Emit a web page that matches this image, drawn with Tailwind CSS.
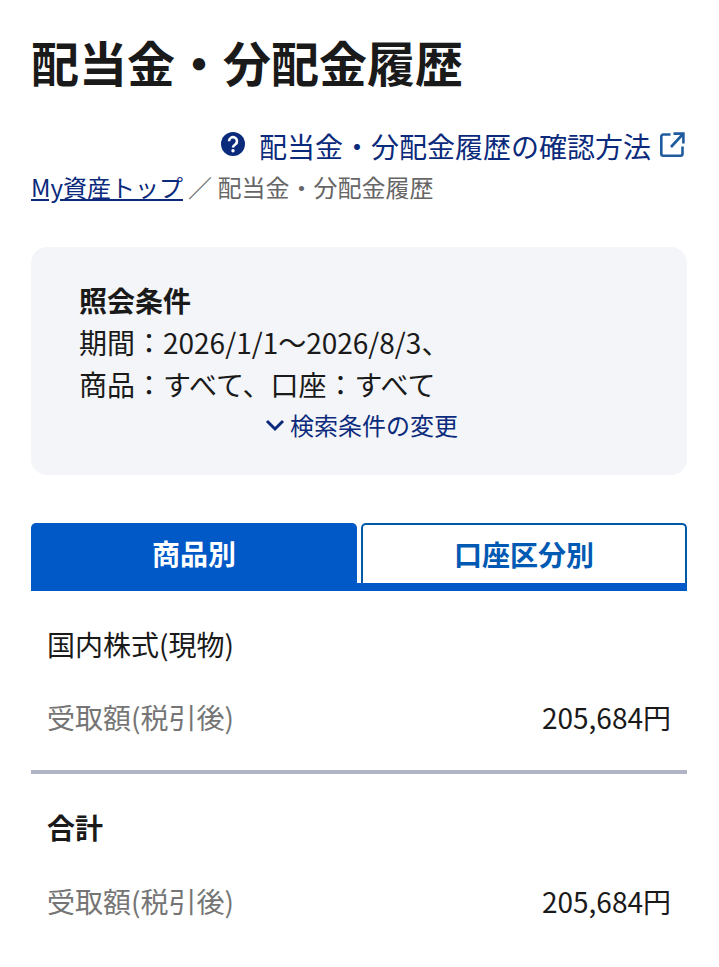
<!DOCTYPE html>
<html lang="ja">
<head>
    <meta charset="UTF-8">
    <meta name="viewport" content="width=device-width, initial-scale=1.0">
    <title>配当金・分配金履歴</title>
    <script src="https://cdn.jsdelivr.net/npm/@tailwindcss/browser@4"></script>
</head>
<body class="bg-white font-['Noto_Sans_CJK_JP','Noto_Sans',sans-serif] text-[#1a1a1a]">
    <div class="pl-[31px] pr-[32px] h-[967px] overflow-hidden">
        <h1 class="pt-[26px] text-[48px] leading-[70px] font-bold">配当金・分配金履歴</h1>

        <!-- help link -->
        <div class="mt-[30px] flex justify-end items-center pr-[2px] h-[40px]">
            <svg class="w-[26px] h-[26px] mr-[13px] -mt-[5px]" viewBox="0 0 26 26"><circle cx="13" cy="13" r="12" fill="#0b2a7c"/><path d="M9 10.200a4 4 0 1 1 6.200 3.300c-1.400.9-2.200 1.500-2.200 3" fill="none" stroke="#fff" stroke-width="2.600"/><circle cx="13" cy="19.800" r="1.700" fill="#fff"/></svg>
            <a href="#" class="text-[28px] text-[#0b2a7c] leading-[40px]">配当金・分配金履歴の確認方法</a>
            <svg class="w-[25px] h-[25px] ml-[9px] -mt-[3px]" viewBox="0 0 25 25" fill="none" stroke="#1f5c9e" stroke-width="2.600"><path d="M10.500 2.500H3.300a2 2 0 0 0-2 2V21.700a2 2 0 0 0 2 2H20.500a2 2 0 0 0 2-2V14.500"/><path d="M13.500 1.600H23.400V11.500M23 2 11 15"/></svg>
        </div>

        <!-- breadcrumb -->
        <div class="flex items-center text-[24px] leading-[36px] mt-[3px]">
            <a href="#" class="text-[#0b2a7c] underline">My資産トップ</a>
            <span class="text-[#666] ml-[5px]">／ 配当金・分配金履歴</span>
        </div>

        <!-- search conditions -->
        <div class="mt-[42px] h-[228px] bg-[#f3f5f8] rounded-[16px] px-[48px] pt-[32px]">
            <p class="text-[28px] leading-[42px] font-bold">照会条件</p>
            <p class="text-[28px] leading-[42px]">期間：2026/1/1〜2026/8/3、</p>
            <p class="text-[28px] leading-[42px]">商品：すべて、口座：すべて</p>
            <div class="flex justify-center items-center text-[24px] leading-[40px] text-[#0b2a7c] pl-[5px]">
                <svg class="w-[20px] h-[14px] mr-[5px]" viewBox="0 0 20 14" fill="none" stroke="#0b2a7c" stroke-width="3"><path d="M2 3l8 8 8-8"/></svg>
                検索条件の変更
            </div>
        </div>

        <!-- tabs -->
        <div class="mt-[48px] flex gap-[4px] h-[68px] border-b-[8px] border-[#0059c7]">
            <div class="w-[326px] bg-[#0059c7] rounded-t-[5px] text-white text-[28px] font-bold flex items-center justify-center">商品別</div>
            <div class="w-[326px] bg-white border-2 border-b-0 border-[#0059a8] rounded-t-[5px] text-[#0059b3] text-[28px] font-bold flex items-center justify-center">口座区分別</div>
        </div>

        <!-- rows -->
        <div class="pl-[16px] pr-[16px] border-b-[4px] border-[#b0b4c6] h-[183px] text-[28px]">
            <p class="pt-[32px] leading-[42px]">国内株式(現物)</p>
            <div class="mt-[31px] flex justify-between leading-[42px]">
                <span class="text-[#757575]">受取額(税引後)</span>
                <span>205,684円</span>
            </div>
        </div>
        <div class="pl-[16px] pr-[16px] text-[28px]">
            <p class="pt-[32px] leading-[42px] font-bold">合計</p>
            <div class="mt-[32px] flex justify-between leading-[42px]">
                <span class="text-[#757575]">受取額(税引後)</span>
                <span>205,684円</span>
            </div>
        </div>
    </div>
</body>
</html>
